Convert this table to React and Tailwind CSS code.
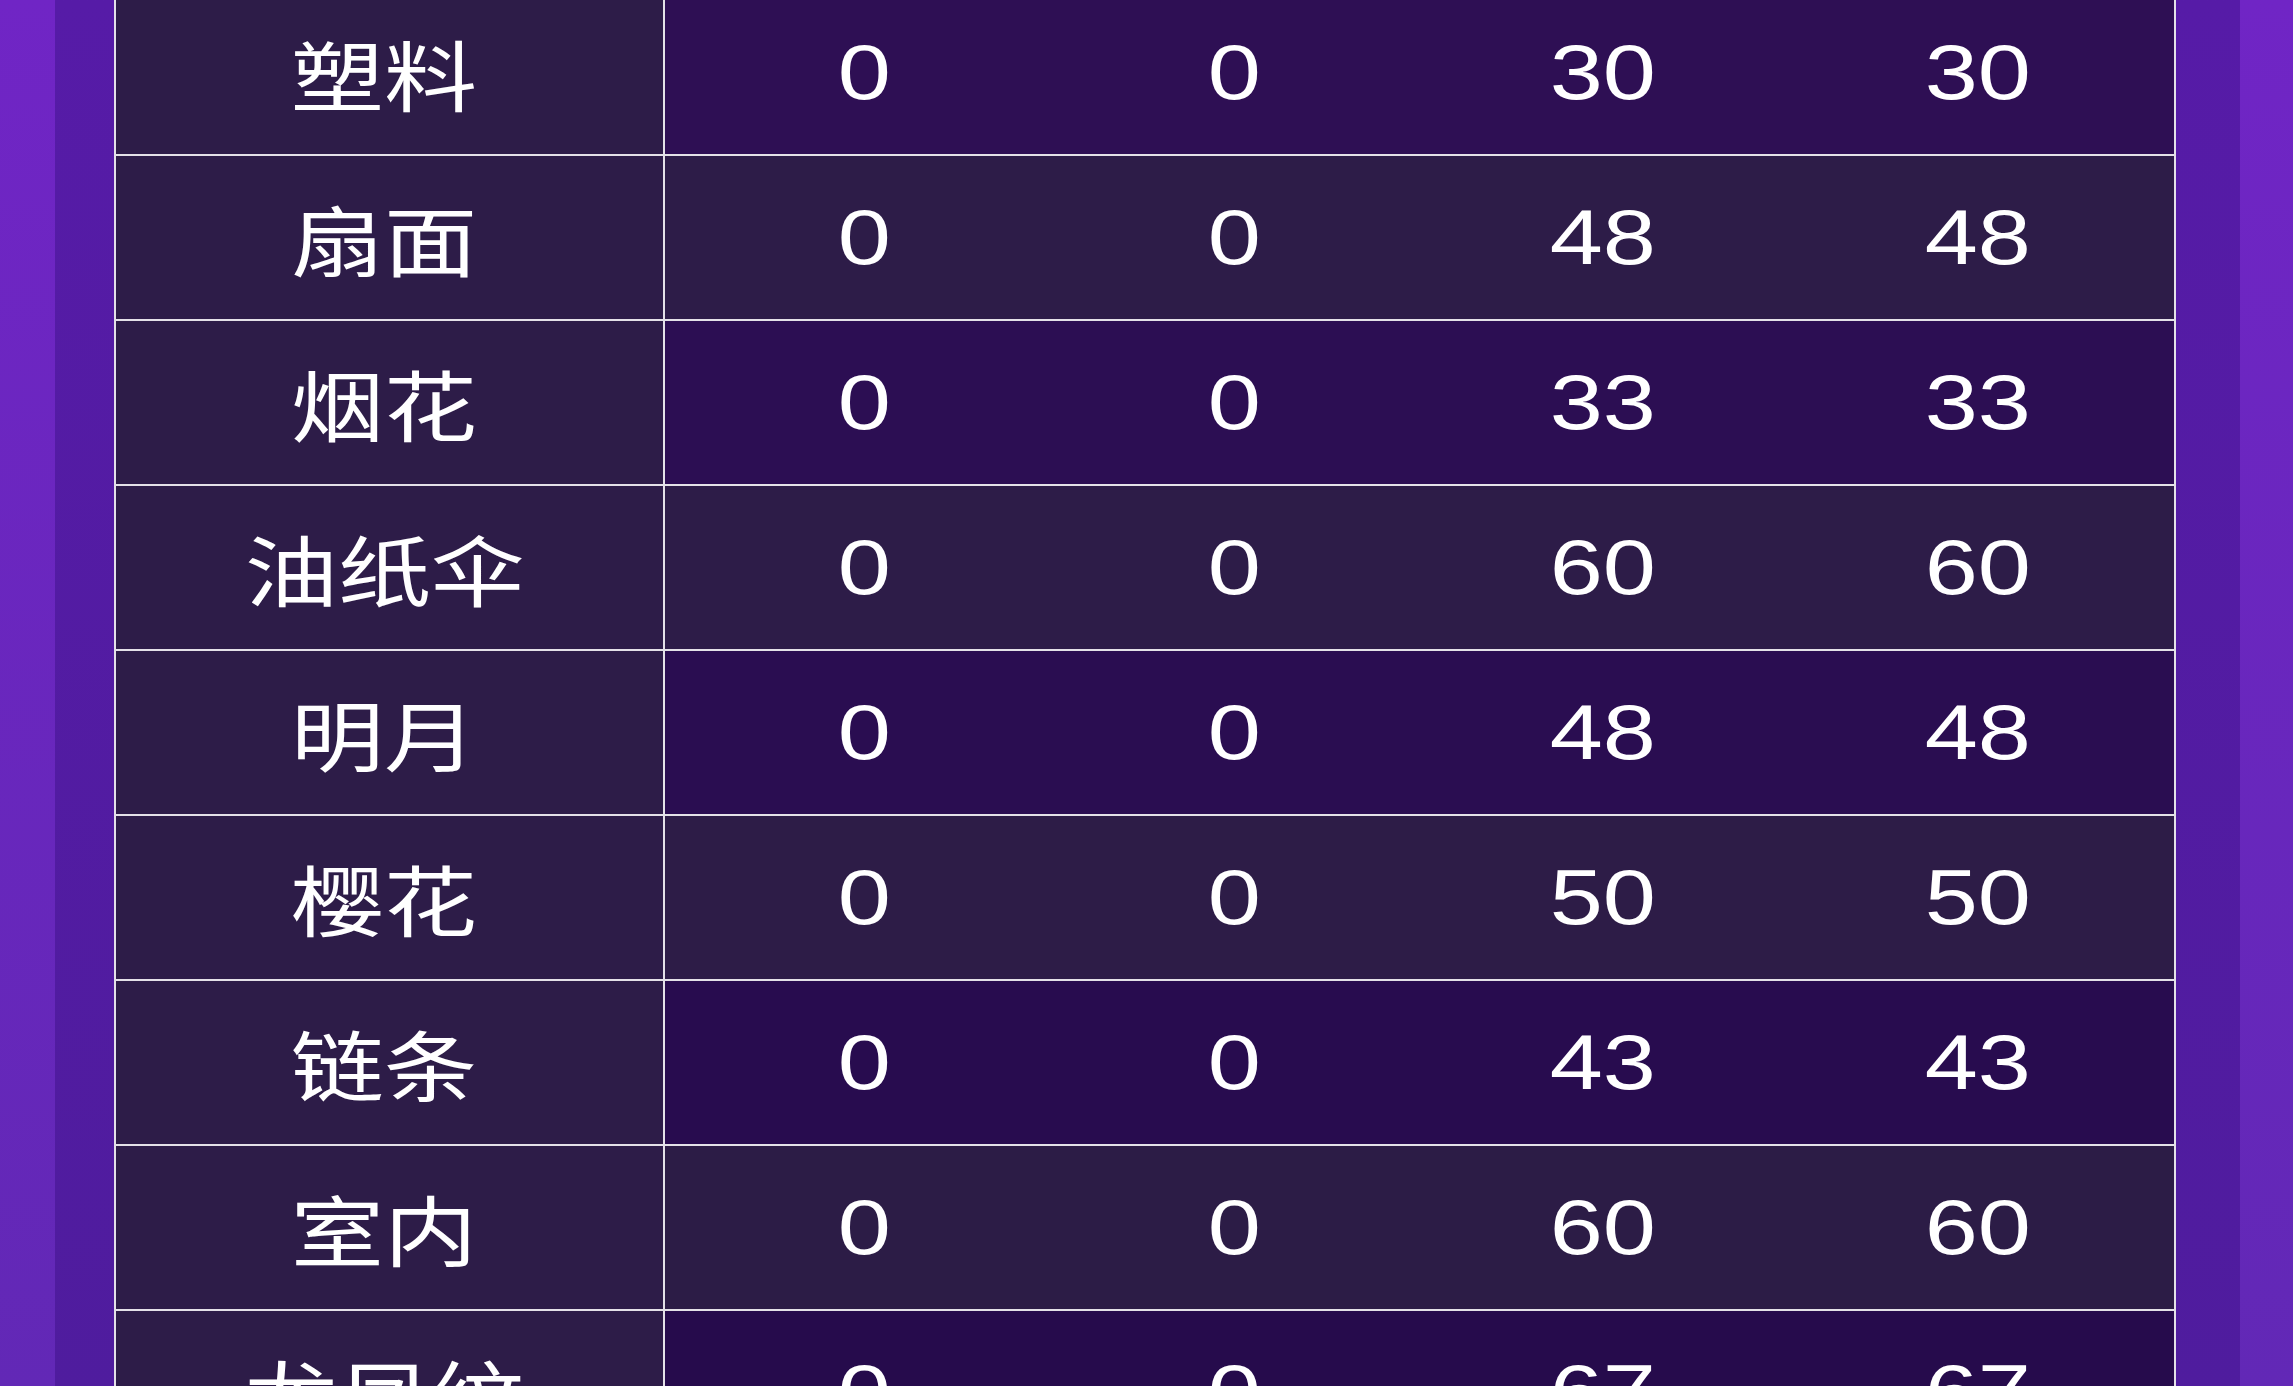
import React from 'react';

const rows = [
  { name: '塑料', values: ['0', '0', '30', '30'], bg: 'bg-[#2e0f54]' },
  { name: '扇面', values: ['0', '0', '48', '48'], bg: 'bg-[#2d1c48]' },
  { name: '烟花', values: ['0', '0', '33', '33'], bg: 'bg-[#2c0e53]' },
  { name: '油纸伞', values: ['0', '0', '60', '60'], bg: 'bg-[#2d1c48]' },
  { name: '明月', values: ['0', '0', '48', '48'], bg: 'bg-[#2a0d51]' },
  { name: '樱花', values: ['0', '0', '50', '50'], bg: 'bg-[#2d1c47]' },
  { name: '链条', values: ['0', '0', '43', '43'], bg: 'bg-[#280c4f]' },
  { name: '室内', values: ['0', '0', '60', '60'], bg: 'bg-[#2c1c46]' },
  { name: '龙凤纹', values: ['0', '0', '67', '67'], bg: 'bg-[#260b4c]' },
];

const numFont = "font-['Liberation_Sans',Arial,sans-serif]";

const NumCell = ({ value, last }) => (
  <div className={`flex items-center justify-center ${last ? 'pr-[19px]' : ''}`}>
    <span className={`inline-block scale-x-[1.24] text-[77px] leading-none text-white ${numFont}`}>
      {value}
    </span>
  </div>
);

const Row = ({ row }) => (
  <div className="grid h-[165px] grid-cols-[549px_399px_341px_396px_1fr] border-b-2 border-[#e4e1e8]">
    <div className="flex items-center justify-center border-r-2 border-[#e4e1e8] bg-[#2d1c48] pr-[11px]">
      <span className="inline-block scale-x-[1.21] text-[77px] leading-none text-white font-['Noto_Sans_CJK_SC',sans-serif]">
        {row.name}
      </span>
    </div>
    <div className={`col-span-4 grid grid-cols-[399px_341px_396px_1fr] ${row.bg}`}>
      {row.values.map((v, i) => (
        <NumCell key={i} value={v} last={i === 3} />
      ))}
    </div>
  </div>
);

export default function App() {
  return (
    <div className="flex h-[1386px] w-full overflow-hidden bg-[#2d1c48]">
      <div className="w-[55px] shrink-0 bg-gradient-to-b from-[#7025c5] to-[#6228b6]" />
      <div className="w-[59px] shrink-0 bg-gradient-to-b from-[#561ba7] to-[#4f1c9e]" />

      <div className="min-w-0 flex-1 border-x-2 border-[#e4e1e8]">
        <div className="-mt-[9px]">
          {rows.map((row) => (
            <Row key={row.name} row={row} />
          ))}
        </div>
      </div>

      <div className="w-[64px] shrink-0 bg-gradient-to-b from-[#561ba7] to-[#4f1c9e]" />
      <div className="w-[53px] shrink-0 bg-gradient-to-b from-[#7025c5] to-[#6228b6]" />
    </div>
  );
}
